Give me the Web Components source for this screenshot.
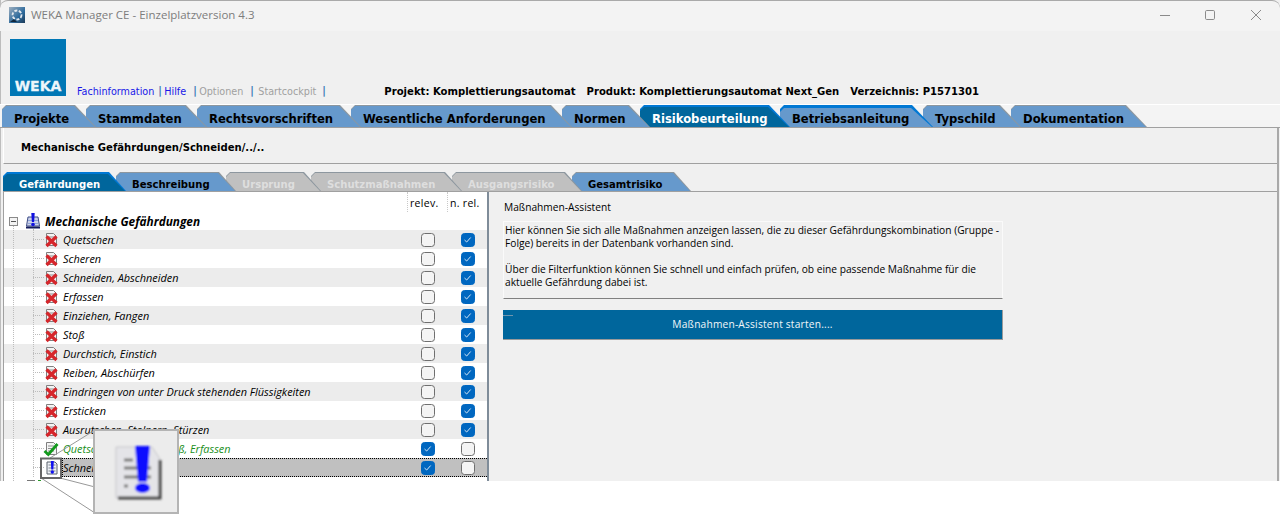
<!DOCTYPE html>
<html lang="de"><head><meta charset="utf-8"><title>WEKA Manager CE</title>
<style>
html,body{margin:0;padding:0;background:#fff;width:1280px;height:523px;overflow:hidden}
body{font:11px "Open Sans",sans-serif}
</style></head><body>
<weka-app></weka-app>
<script>
const FONT='"Open Sans","Noto Sans",sans-serif';
const COND='"DejaVu Sans Condensed","DejaVu Sans",sans-serif';
const docIcon=(overlay)=>`<svg width="14" height="16" viewBox="0 0 14 16" style="overflow:visible"><path d="M1.5 1.5h7l3 3v9h-10z" fill="#f4f4f4" stroke="#7f7f7f"/><path d="M3 5h6M3 7.5h6M3 10h6" stroke="#8f8f8f"/>${overlay}</svg>`;
const ICONS={
 x:docIcon('<path d="M1.5 4.500l10 9.500M11.500 4.500l-10 9.500" stroke="#d6262b" stroke-width="3.200"/>'),
 ok:docIcon('<path d="M-.5 10l3.800 3.500L12.500 3" fill="none" stroke="#129a1c" stroke-width="2.800"/>'),
 warn:`<svg width="14" height="16" viewBox="0 0 14 16"><path d="M2 2h8l2 2v10H2z" fill="#eef1f6" stroke="#59606b"/><path d="M3.500 5h7M3.500 8h7M3.500 11h7" stroke="#7f858f"/><path d="M5.800 1h3l-.5 8.600H6.300z" fill="#1010f0"/><circle cx="7.300" cy="12" r="1.700" fill="#1010f0"/></svg>`,
 root:`<svg width="16" height="16" viewBox="0 0 16 16"><path d="M1.500 13l1.500-9 10 0 1.500 9z" fill="#cdd3ea" stroke="#3d4c86"/><path d="M1 14.500h14" stroke="#141c5c" stroke-width="2"/><path d="M3 7.500h10M3 10.500h10" stroke="#8ea4d8"/><path d="M6.300 0h3.400l-.6 9H6.900z" fill="#1212e0"/><circle cx="8" cy="11.500" r="1.800" fill="#1212e0"/></svg>`
};
function def(name,html,extra){customElements.define(name,class extends HTMLElement{constructor(){super();this.attachShadow({mode:'open'}).innerHTML=html;extra&&extra(this)}})}

def('title-bar',`<style>
:host{display:flex;align-items:center;height:28px;padding:0 0 2px 9px;background:#f3f3f3;border-top:1px solid #a9a9a9;border-radius:8px 8px 0 0;font:11.500px ${FONT};color:#7d7d7d}
svg.app{margin-right:6px;flex:none}
span{flex:1;margin-bottom:1px}
.c{display:flex;align-items:center}
.c svg{display:block;margin-left:35px}
</style><svg class="app" width="16" height="16" viewBox="0 0 16 16"><defs><linearGradient id="g" x1="0" y1="0" x2="1" y2="1"><stop offset="0" stop-color="#9fb0c0"/><stop offset=".6" stop-color="#2d6a9c"/><stop offset="1" stop-color="#1c3b58"/></linearGradient></defs><rect width="16" height="16" fill="url(#g)"/><circle cx="8" cy="8" r="4.500" fill="none" stroke="#e4e9ee" stroke-width="1.800" stroke-dasharray="3 1.500"/><path d="M1 15l4-3 3 3z" fill="#12273c"/></svg><span>WEKA Manager CE - Einzelplatzversion 4.3</span>
<div class="c">
<svg width="10" height="10" viewBox="0 0 10 10" style="margin-left:0"><path d="M0 5.500h10" stroke="#8a8a8a"/></svg>
<svg width="10" height="10" viewBox="0 0 10 10"><rect x=".5" y=".5" width="9" height="9" rx="1.200" fill="none" stroke="#8a8a8a"/></svg>
<svg width="10" height="10" viewBox="0 0 10 10" style="margin-right:19px;margin-left:36px"><path d="M0 0l10 10M10 0L0 10" stroke="#8a8a8a"/></svg>
</div>`);

def('weka-logo',`<style>
:host{display:flex;align-items:flex-end;justify-content:center;width:56px;height:57px;background:#0077b5;box-sizing:border-box;padding-bottom:3px;overflow:hidden;flex:none}
b{font:700 14px "DejaVu Sans",sans-serif;color:#eef6fb;line-height:14px;display:block;-webkit-text-stroke:.3px #eef6fb}
</style><b>WEKA</b>`);

def('top-info',`<style>
:host{display:flex;align-items:flex-end;height:73px;padding:8px 0 8px 10px;box-sizing:border-box;font:10.700px ${COND}}
.links{display:flex;margin:0 0 -3px 11px;line-height:15px;color:#a0a0a0;white-space:nowrap}
.on{color:#1818e8}
i{font:700 11px ${COND};color:#3a7ab8;width:2px;overflow:visible}
.meta{margin:0 0 -3px 54px;display:flex;gap:11px;font-weight:700;color:#000;line-height:15px;font-size:11.200px}
</style><weka-logo></weka-logo>
<div class="links"><span class="on">Fachinformation</span><i style="margin:0 4px">|</i><span class="on">Hilfe</span><i style="margin:0 4px 0 7px">|</i><span>Optionen</span><i style="margin:0 6px 0 7px">|</i><span>Startcockpit</span><i style="margin:0 6px">|</i></div>
<div class="meta"><span>Projekt: Komplettierungsautomat</span><span>Produkt: Komplettierungsautomat Next_Gen</span><span>Verzeichnis: P1571301</span></div>`);

def('tab-item',`<style>
:host{display:block;position:relative;z-index:var(--z);box-sizing:border-box;height:var(--h,22px);flex:none;margin-right:var(--ov,-10px);width:var(--w);padding-left:var(--pl,12px);font:var(--f);color:#000;white-space:nowrap;line-height:var(--lh,27px)}
:host::before,:host::after{content:"";position:absolute;inset:0;clip-path:polygon(0 4px,4px 0,calc(100% - var(--s,21px)) 0,100% 100%,0 100%)}
:host::before{background:#8d979f}
:host::after{background:#6699cc;top:1px;clip-path:polygon(0 4px,4px 0,calc(100% - var(--s,21px) - 1px) 0,calc(100% - 1px) 100%,0 100%)}
:host([state=active])::before{background:#0078d4}
:host([state=active])::after{background:#00669c;top:2px}
:host([state=active]){color:#fff}
:host([state=hot])::before{background:#0078d4}
:host([state=hot])::after{top:3px}
:host([state=off])::after{background:#c0c0c0}
:host([state=off]){color:#dedede}
span{position:relative;z-index:1}
</style><span><slot></slot></span>`);

def('tab-strip',`<style>
:host{display:flex;align-items:flex-end;height:23px;border-bottom:1px solid #a0a0a0;padding-left:var(--x,2px)}
</style><slot></slot>`);

def('main-tabs',`<style>
:host{display:block;--f:700 12.900px ${COND};--ov:-10px;background:linear-gradient(#fff 1px,#f4f4f4 1px)}
tab-item{--s:21px}
</style><tab-strip>
<tab-item style="--w:94px;--z:9">Projekte</tab-item>
<tab-item style="--w:121px;--z:8">Stammdaten</tab-item>
<tab-item style="--w:164px;--z:7">Rechtsvorschriften</tab-item>
<tab-item style="--w:221px;--z:6">Wesentliche Anforderungen</tab-item>
<tab-item style="--w:88px;--z:5">Normen</tab-item>
<tab-item state="active" style="--w:150px;--z:4">Risikobeurteilung</tab-item>
<tab-item state="hot" style="--w:153px;--z:3">Betriebsanleitung</tab-item>
<tab-item style="--w:98px;--z:2">Typschild</tab-item>
<tab-item style="--w:136px;--z:1">Dokumentation</tab-item>
</tab-strip>`);

def('crumb-bar',`<style>
:host{display:flex;align-items:center;height:31px;padding:4px 0 0 17px;border-bottom:1px solid #a0a0a0;border-left:1px solid #fff;margin-left:3px;font:700 11.200px ${COND};color:#000}
</style><slot></slot>`);

def('sub-tabs',`<style>
:host{display:block;--f:700 11.200px ${COND};--h:19px;--lh:25px;--ov:-10px;--s:17px;padding:8px 0 0 3px}
</style><tab-strip style="--x:0;height:19px">
<tab-item state="active" style="--w:123px;--pl:16px;--z:6">Gefährdungen</tab-item>
<tab-item style="--w:120px;--pl:16px;--z:5">Beschreibung</tab-item>
<tab-item state="off" style="--w:95px;--pl:16px;--z:4">Ursprung</tab-item>
<tab-item state="off" style="--w:151px;--pl:16px;--z:3">Schutzmaßnahmen</tab-item>
<tab-item state="off" style="--w:130px;--pl:16px;--z:2">Ausgangsrisiko</tab-item>
<tab-item style="--w:119px;--pl:16px;--z:1">Gesamtrisiko</tab-item>
</tab-strip>`);

def('check-box',`<style>
:host{display:block;width:14px;height:14px;box-sizing:border-box;border:1.500px solid #6f6f6f;border-radius:3.500px;background:#f4f4f4}
:host([on]){background:#0067c0;border-color:#0067c0}
svg{display:none;width:11px;height:11px}
:host([on]) svg{display:block}
</style><svg viewBox="0 0 11 11"><path d="M2.500 6l2.200 2 4-4.500" fill="none" stroke="#d5e6f6" stroke-width="1"/></svg>`);

def('tree-row',`<style>
:host{display:flex;align-items:center;height:19px;position:relative;font:italic 10.900px ${FONT};color:#000;background:#fff}
:host([alt]){background:#ececec}
:host::before{content:"";width:29px;flex:none}
.h{width:11px;flex:none;border-top:1px dotted #bcbcbc;height:0}
.ic{width:14px;height:16px;flex:none;margin:0 3px 0 1px;display:block}
.t{flex:1;align-self:stretch;display:flex;align-items:center;white-space:nowrap;box-sizing:border-box;padding-left:1px}
.a,.b{position:absolute;top:3px}
.a{left:417px}.b{left:457px}
:host([ok]) .t{color:#1a8f1a}
:host([sel]) .t{background:#c0c0c0;border:1px dotted #000;border-width:1px 0 1px 1px;padding-left:0}
</style><span class="h"></span><span class="ic"></span><span class="t"><slot></slot></span><check-box class="a"></check-box><check-box class="b"></check-box>`,el=>{
 queueMicrotask(()=>{const s=el.shadowRoot;s.querySelector('.ic').innerHTML=ICONS[el.getAttribute('icon')||'x'];
 const r=el.getAttribute('rel')==='1';(r?s.querySelector('.a'):s.querySelector('.b')).setAttribute('on','')})
});

def('hazard-tree',`<style>
:host{display:block;width:486px;box-sizing:border-box;position:relative;background:#fff;border-left:1px solid #a0a0a0;border-right:2px solid #7f8c99;height:289px;overflow:hidden;margin-left:3px;flex:none}
.head{display:flex;height:20px;font:10.500px ${FONT};color:#000;letter-spacing:.3px}
.head span{box-sizing:border-box;border-left:1px dotted #c8c8c8;width:40px;padding-left:2px;line-height:22px}
.head span:first-child{margin-left:403px}
.root{display:flex;align-items:center;height:18px;font:italic 700 11.800px ${FONT};padding-left:5px}
.m{width:9px;height:9px;box-sizing:border-box;border:1px solid #8a8a8a;background:linear-gradient(#555,#555) center/5px 1px no-repeat #f4f4f4;margin-right:7px;flex:none}
.root svg{margin-right:4px;display:block}
.line{position:absolute;left:29px;top:37px;height:248px;border-left:1px dotted #bcbcbc}
.line2{position:absolute;left:9px;top:34px;height:255px;border-left:1px dotted #bcbcbc}
.dash{position:absolute;left:23px;bottom:0;width:14px;height:1px;background:linear-gradient(90deg,#777 60%,#fff 60%,#fff 80%,#2a9a2a 80%)}
</style><div class="head"><span>relev.</span><span>n. rel.</span></div>
<div class="root"><span class="m"></span><span id="ri"></span><span>Mechanische Gefährdungen</span></div>
<slot></slot><div class="line"></div><div class="line2"></div><div class="dash"></div>`,el=>{el.shadowRoot.getElementById('ri').innerHTML=ICONS.root});

def('assist-pane',`<style>
:host{display:block;flex:1;padding:9px 0 0 14px;font:10.200px ${FONT};color:#000;line-height:13px}
h4{font:inherit;margin:0 0 7px 1px}
.box{width:500px;height:78px;box-sizing:border-box;padding:2px 0 0 1px;border:1px solid #fafafa;border-bottom-color:#808080;white-space:nowrap}
.btn{margin-top:11px;width:500px;height:30px;background:#00669c;color:#f2f7fa;display:flex;align-items:center;justify-content:center;box-sizing:border-box;border-bottom:1px solid #9a9a9a;border-right:1px solid #9a9a9a;position:relative;letter-spacing:.2px}
.btn::before{content:"";position:absolute;left:0;top:5px;width:10px;height:1px;background:#6f95ae}
</style><h4>Maßnahmen-Assistent</h4>
<div class="box">Hier können Sie sich alle Maßnahmen anzeigen lassen, die zu dieser Gefährdungskombination (Gruppe -<br>Folge) bereits in der Datenbank vorhanden sind.<br><br>Über die Filterfunktion können Sie schnell und einfach prüfen, ob eine passende Maßnahme für die<br>aktuelle Gefährdung dabei ist.</div>
<div class="btn">Maßnahmen-Assistent starten....</div>`);

def('zoom-callout',`<style>
:host{display:block;position:absolute;left:0;top:0;width:1280px;height:523px;pointer-events:none}
svg{position:absolute;left:0;top:0}
</style><svg width="1280" height="523" viewBox="0 0 1280 523">
<defs><filter id="b" x="-10%" y="-10%" width="120%" height="120%"><feGaussianBlur stdDeviation="1"/></filter></defs>
<path d="M50 458L95 430M41 478L95 513M60 478L95 487" stroke="#999" fill="none"/>
<rect x="41" y="458.500" width="20" height="19.500" fill="none" stroke="#666" stroke-width="2"/>
<rect x="94" y="430" width="84" height="83" fill="#ececec" stroke="#b4b4b4" stroke-width="2"/>
<g filter="url(#b)">
<path d="M116 447h36l8 12v39h-44z" fill="#e4e4e8" stroke="#c4c4c8"/>
<path d="M160 460v38h-42" fill="none" stroke="#444" stroke-width="3"/>
<path d="M124 460h9M124 468h27M124 477h27M124 486h4" stroke="#7c7c7c" stroke-width="3"/>
<path d="M135 446h15l-3 36h-9z" fill="#0808ff"/>
<ellipse cx="142.500" cy="488" rx="7.500" ry="5" fill="#0808ff"/>
</g></svg>`);

def('weka-app',`<style>
:host{display:block;width:1280px;height:523px;position:relative;background:#fff;overflow:hidden}
.win{height:481px;background:#f0f0f0;display:flex;flex-direction:column;box-shadow:inset 1px 0 #bdbdbd}
.below{flex:1;min-height:0;display:flex;flex-direction:column;border-right:2px solid #a9a9a9;margin-right:1px}
.work{display:flex;flex:1;min-height:0}
</style><div class="win"><title-bar></title-bar><top-info></top-info><main-tabs></main-tabs><div class="below"><crumb-bar>Mechanische Gefährdungen/Schneiden/../..</crumb-bar><sub-tabs></sub-tabs>
<div class="work"><hazard-tree>
<tree-row alt>Quetschen</tree-row><tree-row>Scheren</tree-row><tree-row alt>Schneiden, Abschneiden</tree-row><tree-row>Erfassen</tree-row><tree-row alt>Einziehen, Fangen</tree-row><tree-row>Stoß</tree-row><tree-row alt>Durchstich, Einstich</tree-row><tree-row>Reiben, Abschürfen</tree-row><tree-row alt>Eindringen von unter Druck stehenden Flüssigkeiten</tree-row><tree-row>Ersticken</tree-row><tree-row alt>Ausrutschen, Stolpern, Stürzen</tree-row>
<tree-row icon="ok" ok rel="1">Quetschen, Scheren, Stoß, Erfassen</tree-row><tree-row icon="warn" sel rel="1">Schneiden</tree-row>
</hazard-tree><assist-pane></assist-pane></div></div></div><zoom-callout></zoom-callout>`);
</script></body></html>
